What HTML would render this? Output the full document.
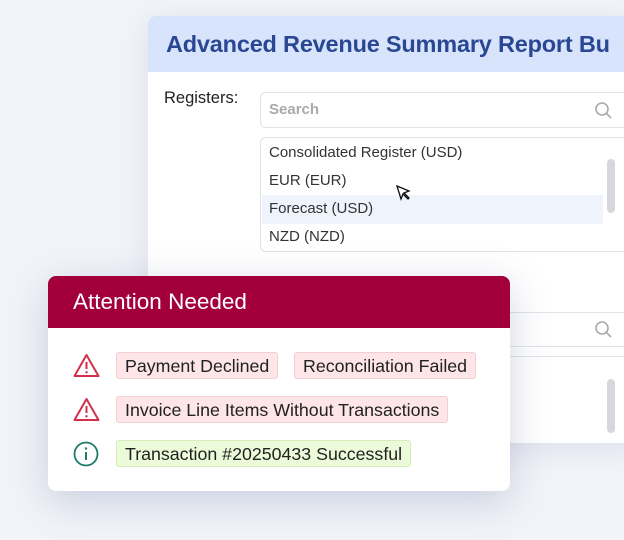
<!DOCTYPE html>
<html><head><style>
*{margin:0;padding:0;box-sizing:border-box}
body{width:624px;height:540px;overflow:hidden;background:#f2f4f9;font-family:"Liberation Sans",sans-serif;position:relative}
.panel{position:absolute;left:148px;top:16px;width:490px;height:427px;background:#fff;border-radius:8px;box-shadow:0 6px 30px rgba(120,130,170,.18);overflow:hidden}
.ph{height:56px;background:#d8e4fb;color:#2a4794;font-weight:bold;font-size:23.5px;padding:15px 0 0 18px;white-space:nowrap;letter-spacing:-0.2px}
.lab{position:absolute;left:16px;top:73px;font-size:16.5px;color:#222}
.box{position:absolute;left:112px;width:380px;border:1px solid #dfe2ea;border-radius:6px;background:#fff}
.row{position:absolute;left:8px;font-size:15px;color:#333}
.card{position:absolute;left:48px;top:276px;width:462px;height:215px;background:#fff;border-radius:8px;box-shadow:0 10px 40px rgba(80,90,140,.25);overflow:hidden}
.ch{height:52px;background:#a3003b;color:#fff;font-size:22.5px;padding:13px 0 0 25px}
.chip{position:absolute;height:27px;border-radius:3px;font-size:17.8px;color:#222;padding:3px 8px 0 8px;white-space:nowrap}
.r{background:#fde5e8;border:1px solid #f6cdd2}
.g{background:#ebfad8;border:1px solid #d6eeba}
.ic{position:absolute;left:25px}
</style></head><body>
<div class="panel">
 <div class="ph">Advanced Revenue Summary Report Bu</div>
 <div class="lab">Registers:</div>
 <div class="box" style="top:76px;height:36px"><span style="position:absolute;left:8px;top:8px;color:#aaa;font-size:15px;font-weight:bold">Search</span>
  <svg style="position:absolute;left:333px;top:8px" width="20" height="20" viewBox="0 0 20 20"><circle cx="8" cy="8" r="6" fill="none" stroke="#aaa" stroke-width="1.6"/><path d="M12.5 12.5L17 17" stroke="#aaa" stroke-width="1.6"/></svg></div>
 <div class="box" style="top:121px;height:115px">
  <div style="position:absolute;left:1px;top:57px;width:341px;height:29px;background:#eef3fc"></div>
  <div class="row" style="top:6px">Consolidated Register (USD)</div>
  <div class="row" style="top:34px">EUR (EUR)</div>
  <div class="row" style="top:62px">Forecast (USD)</div>
  <div class="row" style="top:90px">NZD (NZD)</div>
  <div style="position:absolute;left:346px;top:21px;width:8px;height:54px;border-radius:4px;background:#d6d8de"></div>
 </div>
 <svg style="position:absolute;left:248px;top:169px" width="16" height="16" viewBox="0 0 16 16"><path d="M1 1L13 6L8 8L13 13L12 14L7 9L5 14Z" fill="#fff" stroke="#111" stroke-width="1.3"/></svg>
 <div class="box" style="top:296px;height:35px"><svg style="position:absolute;left:333px;top:7px" width="20" height="20" viewBox="0 0 20 20"><circle cx="8" cy="8" r="6" fill="none" stroke="#aaa" stroke-width="1.6"/><path d="M12.5 12.5L17 17" stroke="#aaa" stroke-width="1.6"/></svg></div>
 <div class="box" style="top:340px;height:100px"><div style="position:absolute;left:346px;top:22px;width:8px;height:54px;border-radius:4px;background:#d6d8de"></div></div>
</div>
<div class="card">
 <div class="ch">Attention Needed</div>
 <svg class="ic" style="top:77px" width="27" height="25" viewBox="0 0 27 25"><path d="M13.5 2L25.5 23H1.5Z" fill="none" stroke="#d2304a" stroke-width="2" stroke-linejoin="round"/><path d="M13.5 9V16" stroke="#d2304a" stroke-width="2"/><circle cx="13.5" cy="19.3" r="1.2" fill="#d2304a"/></svg>
 <div class="chip r" style="left:68px;top:76px">Payment Declined</div>
 <div class="chip r" style="left:246px;top:76px">Reconciliation Failed</div>
 <svg class="ic" style="top:121px" width="27" height="25" viewBox="0 0 27 25"><path d="M13.5 2L25.5 23H1.5Z" fill="none" stroke="#d2304a" stroke-width="2" stroke-linejoin="round"/><path d="M13.5 9V16" stroke="#d2304a" stroke-width="2"/><circle cx="13.5" cy="19.3" r="1.2" fill="#d2304a"/></svg>
 <div class="chip r" style="left:68px;top:120px">Invoice Line Items Without Transactions</div>
 <svg class="ic" style="top:165px" width="26" height="26" viewBox="0 0 26 26"><circle cx="13" cy="13" r="11.5" fill="none" stroke="#1f7a6a" stroke-width="1.8"/><path d="M13 11V19" stroke="#1f7a6a" stroke-width="2"/><circle cx="13" cy="7.5" r="1.2" fill="#1f7a6a"/></svg>
 <div class="chip g" style="left:68px;top:164px">Transaction #20250433 Successful</div>
</div>
</body></html>
